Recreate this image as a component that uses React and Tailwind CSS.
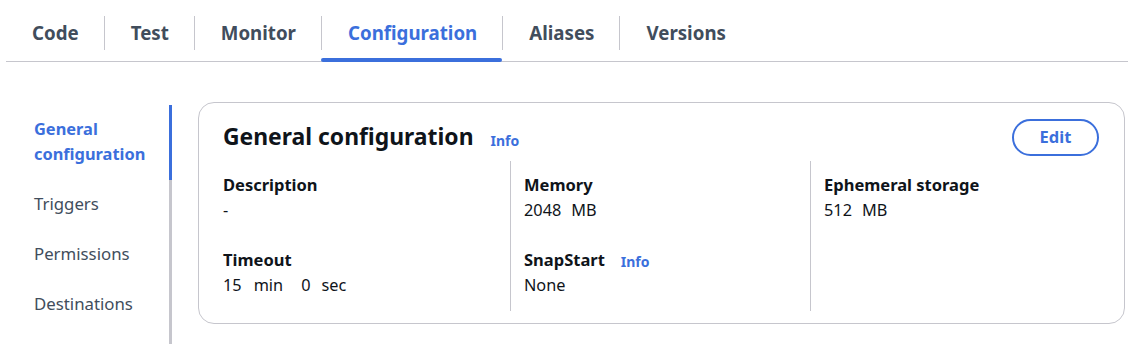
import React from 'react';

const tabs = ['Code', 'Test', 'Monitor', 'Configuration', 'Aliases', 'Versions'];
const navItems = ['General configuration', 'Triggers', 'Permissions', 'Destinations'];

function Info() {
  return <span className="text-[14px] font-bold text-[#3b6fdc] leading-none">Info</span>;
}

function Field({ label, info, children }) {
  return (
    <div className="flex flex-col">
      <div className="flex items-center h-[24px] text-[16.5px] font-bold leading-[24px] text-[#0f141a]">
        {label}
        {info && <span className="ml-[16px] pt-[2px] leading-none"><Info /></span>}
      </div>
      <div className="flex mt-[1px] -mb-[1px] text-[16.3px] leading-[25px] text-[#0f141a]">{children}</div>
    </div>
  );
}

export default function App() {
  const active = 'Configuration';

  return (
    <div className="w-[1141px] h-[344px] bg-white overflow-hidden" style={{ fontFamily: '"Noto Sans", "Open Sans", sans-serif' }}>
      {/* Tabs */}
      <div className="ml-[6px] w-[1122px] h-[61px] flex border-b border-[#c6c6cd] box-content">
        {tabs.map((t, i) => (
          <React.Fragment key={t}>
            {i > 0 && <div className="w-px h-[34px] mt-[16px] bg-[#c6c6cd]" />}
            <div className={`relative flex items-center pt-[6px] ${i === 0 ? 'pl-[26px] pr-[25px]' : 'pl-[26px] pr-[25px]'}`}>
              <span className={`text-[18.7px] font-bold ${t === active ? 'text-[#3b6fdc]' : 'text-[#414d5c]'}`}>{t}</span>
              {t === active && <div className="absolute left-[-1px] right-0 -bottom-px h-[4px] rounded-full bg-[#3b6fdc]" />}
            </div>
          </React.Fragment>
        ))}
      </div>

      <div className="flex h-[282px]">
        {/* Side nav */}
        <div className="w-[172px] pt-[43px] flex flex-col">
          {navItems.map((n, i) => (
            <div
              key={n}
              className={`pl-[34px] pr-[10px] pt-[11px] pb-[14px] border-r-[3px] leading-[25px] ${i === 0 ? 'border-[#3b6fdc] text-[#3b6fdc] font-bold text-[16.4px]' : 'border-[#c6c6cd] text-[#414d5c] text-[16.8px]'}`}
            >
              {n}
            </div>
          ))}
          <div className="flex-1 border-r-[3px] border-[#c6c6cd]" />
        </div>

        {/* Card */}
        <div className="ml-[26px] mt-[40px] w-[927px] h-[222px] border border-[#c6c6cd] rounded-[16px] pl-[24px] pr-[25px] pt-[17px]">
          <div className="flex items-center justify-between h-[37px]">
            <div className="flex items-center">
              <h2 className="text-[22.9px] font-bold text-[#0f141a] leading-[30px] -mt-[4px]">General configuration</h2>
              <span className="ml-[17px] pt-[2px] leading-none"><Info /></span>
            </div>
            <button className="w-[87px] h-[37px] rounded-full border-2 border-[#3b6fdc] text-[16.5px] font-bold text-[#3b6fdc] leading-none -mt-[2px]">
              Edit
            </button>
          </div>

          <div className="mt-[4px] grid grid-cols-[287px_300px_1fr] h-[150px]">
            <div className="pt-[12px] flex flex-col gap-[26px]">
              <Field label="Description">-</Field>
              <Field label="Timeout">
                <span>15</span>
                <span className="ml-[12px]">min</span>
                <span className="ml-[18px]">0</span>
                <span className="ml-[11px]">sec</span>
              </Field>
            </div>
            <div className="pt-[12px] pl-[13px] border-l border-[#c6c6cd] flex flex-col gap-[26px]">
              <Field label="Memory">
                <span>2048</span>
                <span className="ml-[10px]">MB</span>
              </Field>
              <Field label="SnapStart" info>None</Field>
            </div>
            <div className="pt-[12px] pl-[13px] border-l border-[#c6c6cd] flex flex-col gap-[26px]">
              <Field label="Ephemeral storage">
                <span>512</span>
                <span className="ml-[10px]">MB</span>
              </Field>
            </div>
          </div>
        </div>
      </div>
    </div>
  );
}
